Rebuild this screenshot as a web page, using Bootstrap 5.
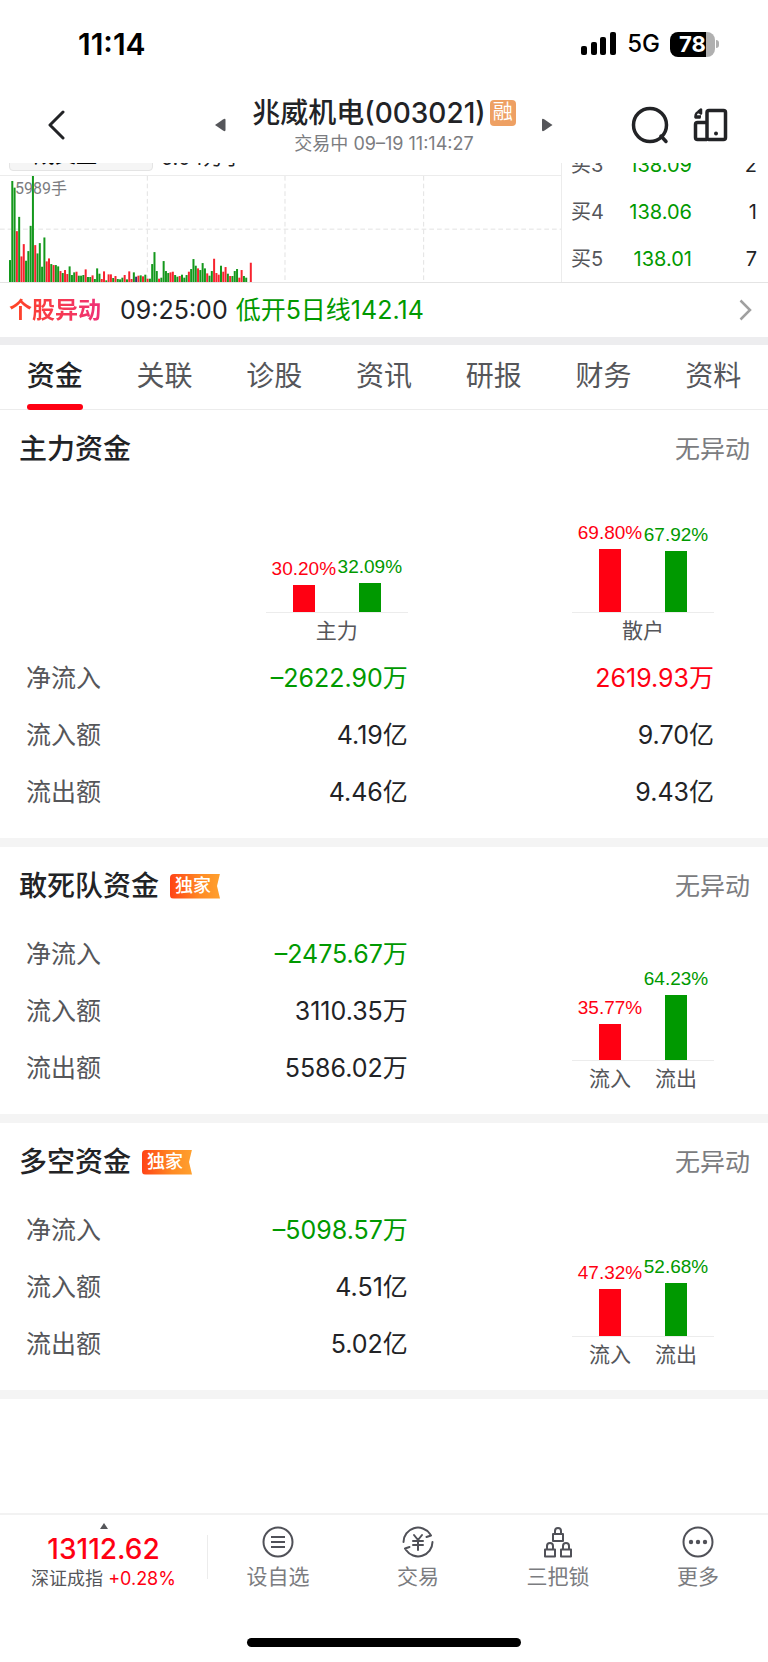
<!DOCTYPE html>
<html lang="zh-CN">
<head>
<meta charset="utf-8">
<meta name="viewport" content="width=device-width, initial-scale=1">
<title>兆威机电(003021)</title>
<link href="https://cdn.jsdelivr.net/npm/bootstrap@5.3.0/dist/css/bootstrap.min.css" rel="stylesheet">
<style>
  :root { --up: #ff0012; --down: #009900; --ink: #222326; --soft: #55565a; --hint: #7b7c80; --rule: #ececec; }
  body { font-family: Inter, "Noto Sans CJK SC", sans-serif; color: var(--ink); background: #fff; }
  a { color: inherit; text-decoration: none; }
  svg { display: block; flex: none; }
  .icon-btn { border: 0; background: none; padding: 0; color: var(--ink); }
  .up { color: var(--up); }
  .down { color: var(--down); }

  .status { height: 86px; padding: 2px 49px 0 78px; color: #000; }
  .clock { font-size: 30px; font-weight: 600; line-height: 36px; }
  .network { font-size: 24px; font-weight: 500; line-height: 28px; margin: 0 10px; }
  .battery { width: 45px; height: 25px; border-radius: 8px; margin-right: 4px; position: relative; color: #fff; font-size: 22px; font-weight: 700; line-height: 25px; text-align: center; background: linear-gradient(90deg, #000 79%, #b0b0b0 79%); }
  .battery::after { content: ""; position: absolute; right: -4px; top: 8px; width: 3px; height: 8px; border-radius: 0 3px 3px 0; background: #b0b0b0; }

  .topbar { height: 77px; padding: 0 40px; }
  .side { flex: 1 1 0; }
  .stock { width: 338px; }
  .stock h1 { font-size: 28px; font-weight: 500; line-height: 38px; margin: 0; }
  .stock p { font-size: 18px; line-height: 22px; margin: 1px 0 0; color: var(--hint); }
  .margin-tag { width: 26px; height: 26px; border-radius: 4px; background: #eea063; color: #fff; font-size: 20px; line-height: 25px; font-weight: 400; text-align: center; margin-left: 4px; }

  .quote { height: 120px; overflow: hidden; border-bottom: 1px solid #e4e4e4; }
  .volume { flex: 1 1 0; border-right: 1px solid var(--rule); }
  .volume-bar { height: 34px; padding: 0 0 4px 9px; flex: none; font-size: 20px; line-height: 34px; }
  .metric { width: 144px; border: 1px solid #e4e4e4; border-radius: 4px; background: #f5f5f5; padding: 0 24px 2px; font-size: 21px; line-height: 26px; margin-right: 8px; }
  .plot { height: 107px; border-top: 1px solid var(--rule); position: relative; flex: none; }
  .plot svg { width: 100%; height: 107px; }
  .plot span { position: absolute; left: 15px; top: 2px; font-family: Roboto, "Noto Sans CJK SC", sans-serif; font-size: 16px; line-height: 22px; color: var(--hint); }
  .book { width: 206px; font-size: 20px; }
  .book tr { height: 47px; }
  .book td, .book th { padding: 0; font-weight: 400; vertical-align: middle; line-height: 24px; }
  .book th { padding-left: 9px; color: var(--soft); }
  .book td:last-child { padding-right: 11px; width: 76px; }

  .alert-row { height: 54px; padding: 0 16px 0 9px; font-size: 25px; line-height: 30px; }
  .alert-tag { font-size: 23px; font-weight: 700; margin-right: 19px; background: linear-gradient(90deg, #ff4422, #ef2f78); -webkit-background-clip: text; background-clip: text; color: transparent; }
  .band { height: 9px; background: #f4f4f4; }
  .band-dark { background: #ededef; height: 8px; }

  .tabs { height: 65px; border-bottom: 1px solid var(--rule); flex-wrap: nowrap; }
  .tabs .nav-item { flex: 1 1 0; }
  .tabs .nav-link { display: inline-block; padding: 15px 0 12px; font-size: 28px; line-height: 32px; color: var(--soft); border-bottom: 6px solid transparent; height: 65px; }
  .tabs .nav-link.active { color: var(--ink); font-weight: 500; position: relative; }
  .tabs .nav-link.active::after { content: ""; position: absolute; left: 0; right: 0; bottom: -6px; height: 6px; border-radius: 3px; background: var(--up); }

  .fund { padding-bottom: 18px; }
  .fund header { height: 78px; padding: 0 18px 0 19px; }
  .fund h2 { font-size: 28px; font-weight: 500; line-height: 36px; margin: 0; }
  .state { font-size: 25px; line-height: 32px; color: var(--hint); }
  .exclusive { width: 50px; height: 25px; margin-left: 11px; border-radius: 4px 0 0 4px; padding-left: 5px; color: #fff; font-size: 18px; font-weight: 500; line-height: 24px; background: linear-gradient(90deg, #ff4316, #ff8a24 60%, #ffa02e); clip-path: polygon(0 0, 100% 0, 94% 50%, 100% 100%, 0 100%); }
  .fund-body { padding: 0 54px 0 26px; }
  .flows { font-size: 25px; line-height: 32px; width: 100%; table-layout: fixed; }
  .flows-half { width: 55.5%; }
  .flows tr { height: 57px; }
  .flows th, .flows td { padding: 0; vertical-align: middle; font-weight: 400; }
  .flows th { color: var(--soft); }
  .flows thead th { height: 161px; vertical-align: bottom; padding-bottom: 3px; }
  .flows .name-col { width: 25%; }
  .flows .main-col { width: 30.5%; }
  .pair { width: 142px; margin: 0 0 0 auto; color: var(--soft); }
  .pair-bars { padding: 0 5px; border-bottom: 1px solid var(--rule); }
  .pair-bars > div { width: 66px; font-family: "Liberation Sans", sans-serif; font-size: 19px; line-height: 20px; }
  .pair-bars i { display: block; width: 22px; margin-top: 6px; background: currentColor; }
  .pair figcaption { font-size: 21px; line-height: 30px; padding: 3px 5px 0; }
  .pair figcaption span { width: 66px; text-align: center; }
  .beside { padding-bottom: 2px; }

  .dock { height: 149px; border-top: 2px solid #f2f2f2; }
  .index-link { width: 207px; padding-top: 8px; }
  .index-link strong { font-size: 28px; font-weight: 500; line-height: 36px; margin-top: 2px; }
  .index-link small { font-size: 18px; line-height: 24px; color: var(--soft); }
  .dock-split { width: 1px; height: 44px; margin-top: 20px; background: var(--rule); }
  .dock nav a { flex: 1 1 0; padding-top: 11px; color: var(--hint); font-size: 21px; line-height: 26px; }
  .dock nav svg { color: #505158; margin-bottom: 6px; }
  .home { width: 274px; height: 9px; border-radius: 5px; background: #000; margin: 0 auto 15px; }
</style>
</head>
<body>
<div class="d-flex flex-column min-vh-100">
  <div class="status d-flex align-items-center">
    <span class="clock me-auto">11:14</span>
    <svg width="36" height="24" viewBox="0 0 36 24" fill="currentColor"><rect x="0" y="14" width="6" height="9" rx="2"/><rect x="10" y="10" width="6" height="13" rx="2"/><rect x="19" y="5" width="6" height="18" rx="2"/><rect x="29" y="0" width="6" height="23" rx="2"/></svg>
    <span class="network">5G</span>
    <span class="battery">78</span>
  </div>

  <div class="topbar d-flex align-items-center">
    <div class="side d-flex">
      <button class="icon-btn ms-2" type="button" aria-label="返回"><svg width="18" height="30" viewBox="0 0 18 30" fill="none" stroke="currentColor" stroke-width="3" stroke-linecap="round" stroke-linejoin="round"><path d="M15 2 2 15 15 28"/></svg></button>
    </div>
    <div class="stock d-flex align-items-center justify-content-between">
      <button class="icon-btn" type="button" aria-label="上一只"><svg width="11" height="14" viewBox="0 0 11 14" fill="#55565a"><path d="M0 7 8 1.500Q10.500 0 10.500 2V12Q10.500 14 8 12.500Z"/></svg></button>
      <div class="text-center">
        <div class="d-flex align-items-center justify-content-center"><h1>兆威机电(003021)</h1><span class="margin-tag">融</span></div>
        <p>交易中 09–19 11:14:27</p>
      </div>
      <button class="icon-btn" type="button" aria-label="下一只"><svg width="11" height="14" viewBox="0 0 11 14" fill="#55565a"><path d="M10.500 7 2.500 1.500Q0 0 0 2V12Q0 14 2.500 12.500Z"/></svg></button>
    </div>
    <div class="side d-flex justify-content-end align-items-center gap-4">
      <button class="icon-btn" type="button" aria-label="搜索"><svg width="38" height="38" viewBox="0 0 38 38" fill="none" stroke="currentColor" stroke-width="3.500" stroke-linecap="round"><circle cx="19" cy="19" r="16.500"/><path d="m30 30 5 5.500"/></svg></button>
      <button class="icon-btn" type="button" aria-label="横竖屏切换"><svg width="35" height="34" viewBox="0 0 35 34" fill="none" stroke="currentColor" stroke-width="3.500" stroke-linejoin="round"><rect x="14" y="2.500" width="18.500" height="29" rx="2"/><path d="M14 14.500H4.500a2 2 0 0 0-2 2V29.500a2 2 0 0 0 2 2H14"/><path d="M7.500 9.500H2.500Q2 3.500 8 3.500M2.500 8.500 8 8.500M5.500 3.500 8 1.500V5.500Z" stroke-width="2.500"/><circle cx="23" cy="25.500" r="2" fill="currentColor" stroke="none"/></svg></button>
    </div>
  </div>

  <div class="quote d-flex align-items-end">
    <div class="volume d-flex flex-column">
      <div class="volume-bar d-flex"><button class="metric text-start" type="button">成交量</button><span>5.04万手</span></div>
      <div class="plot">
        <svg id="volumePlot" viewBox="0 60 1683 322" preserveAspectRatio="none" role="img" aria-label="成交量">
          <g stroke="#e2e2e2" stroke-width="3" stroke-dasharray="14 9"><path d="M0 220H1683M442 60V382M855 60V382M1271 60V382"/></g>
        </svg>
        <span>5989手</span>
      </div>
    </div>
    <table class="book">
      <tr><th scope="row">买3</th><td class="down text-end">138.09</td><td class="text-end">2</td></tr>
      <tr><th scope="row">买4</th><td class="down text-end">138.06</td><td class="text-end">1</td></tr>
      <tr><th scope="row">买5</th><td class="down text-end">138.01</td><td class="text-end">7</td></tr>
    </table>
  </div>

  <a class="alert-row d-flex align-items-center" href="#">
    <span class="alert-tag">个股异动</span><span class="me-2">09:25:00</span><span class="down me-auto">低开5日线142.14</span>
    <svg width="13" height="22" viewBox="0 0 13 22" fill="none" stroke="#a0a0a0" stroke-width="2.500"><path d="m1.500 1.500 9.500 9.500-9.500 9.500"/></svg>
  </a>
  <div class="band band-dark"></div>

  <ul class="tabs nav text-center">
    <li class="nav-item"><a class="nav-link active" href="#" aria-current="page">资金</a></li>
    <li class="nav-item"><a class="nav-link" href="#">关联</a></li>
    <li class="nav-item"><a class="nav-link" href="#">诊股</a></li>
    <li class="nav-item"><a class="nav-link" href="#">资讯</a></li>
    <li class="nav-item"><a class="nav-link" href="#">研报</a></li>
    <li class="nav-item"><a class="nav-link" href="#">财务</a></li>
    <li class="nav-item"><a class="nav-link" href="#">资料</a></li>
  </ul>

  <section class="fund">
    <header class="d-flex align-items-center"><h2 class="me-auto">主力资金</h2><span class="state">无异动</span></header>
    <div class="fund-body">
      <table class="flows">
        <thead><tr>
          <td class="name-col"></td>
          <th class="main-col" scope="col"><figure class="pair"><div class="pair-bars d-flex align-items-end">
            <div class="up d-flex flex-column align-items-center">30.20%<i style="height:27px"></i></div>
            <div class="down d-flex flex-column align-items-center">32.09%<i style="height:29px"></i></div>
          </div><figcaption class="text-center">主力</figcaption></figure></th>
          <th scope="col"><figure class="pair"><div class="pair-bars d-flex align-items-end">
            <div class="up d-flex flex-column align-items-center">69.80%<i style="height:63px"></i></div>
            <div class="down d-flex flex-column align-items-center">67.92%<i style="height:61px"></i></div>
          </div><figcaption class="text-center">散户</figcaption></figure></th>
        </tr></thead>
        <tbody>
          <tr><th scope="row">净流入</th><td class="text-end down">–2622.90万</td><td class="text-end up">2619.93万</td></tr>
          <tr><th scope="row">流入额</th><td class="text-end">4.19亿</td><td class="text-end">9.70亿</td></tr>
          <tr><th scope="row">流出额</th><td class="text-end">4.46亿</td><td class="text-end">9.43亿</td></tr>
        </tbody>
      </table>
    </div>
  </section>
  <div class="band"></div>

  <section class="fund">
    <header class="d-flex align-items-center"><h2>敢死队资金</h2><span class="exclusive me-auto">独家</span><span class="state">无异动</span></header>
    <div class="fund-body d-flex align-items-end justify-content-between">
      <div class="flows-half"><table class="flows">
        <tr><th scope="row">净流入</th><td class="text-end down">–2475.67万</td></tr>
        <tr><th scope="row">流入额</th><td class="text-end">3110.35万</td></tr>
        <tr><th scope="row">流出额</th><td class="text-end">5586.02万</td></tr>
      </table></div>
      <figure class="pair beside"><div class="pair-bars d-flex align-items-end">
        <div class="up d-flex flex-column align-items-center">35.77%<i style="height:36px"></i></div>
        <div class="down d-flex flex-column align-items-center">64.23%<i style="height:65px"></i></div>
      </div><figcaption class="d-flex"><span>流入</span><span>流出</span></figcaption></figure>
    </div>
  </section>
  <div class="band"></div>

  <section class="fund">
    <header class="d-flex align-items-center"><h2>多空资金</h2><span class="exclusive me-auto">独家</span><span class="state">无异动</span></header>
    <div class="fund-body d-flex align-items-end justify-content-between">
      <div class="flows-half"><table class="flows">
        <tr><th scope="row">净流入</th><td class="text-end down">–5098.57万</td></tr>
        <tr><th scope="row">流入额</th><td class="text-end">4.51亿</td></tr>
        <tr><th scope="row">流出额</th><td class="text-end">5.02亿</td></tr>
      </table></div>
      <figure class="pair beside"><div class="pair-bars d-flex align-items-end">
        <div class="up d-flex flex-column align-items-center">47.32%<i style="height:47px"></i></div>
        <div class="down d-flex flex-column align-items-center">52.68%<i style="height:53px"></i></div>
      </div><figcaption class="d-flex"><span>流入</span><span>流出</span></figcaption></figure>
    </div>
  </section>
  <div class="band"></div>

  <footer class="dock d-flex flex-column mt-auto">
    <div class="d-flex align-items-start">
      <a class="index-link d-flex flex-column align-items-center" href="#">
        <svg width="8" height="6" viewBox="0 0 8 6" fill="#55565a"><path d="M4 0 8 6H0Z"/></svg>
        <strong class="up">13112.62</strong>
        <small>深证成指 <span class="up">+0.28%</span></small>
      </a>
      <div class="dock-split"></div>
      <nav class="d-flex flex-fill">
        <a class="d-flex flex-column align-items-center" href="#"><svg width="32" height="32" viewBox="0 0 32 32" fill="none" stroke="currentColor" stroke-width="2"><circle cx="16" cy="16" r="14.500"/><path d="M9 11H23M9 16H23M9 21H23"/></svg>设自选</a>
        <a class="d-flex flex-column align-items-center" href="#"><svg width="32" height="32" viewBox="0 0 32 32" fill="none" stroke="currentColor" stroke-width="2" stroke-linejoin="round" stroke-linecap="round"><path d="M1.500 16A14.500 14.500 0 0 1 28 8L29 9.500 24.500 11M30.500 16A14.500 14.500 0 0 1 4 24L3 22.500 7.500 21"/><path d="m12 9 4 5 4-5M16 14v10M11 15H21M11 19H21"/></svg>交易</a>
        <a class="d-flex flex-column align-items-center" href="#"><svg width="32" height="32" viewBox="0 0 32 32" fill="none" stroke="currentColor" stroke-width="2" stroke-linejoin="round"><path d="M11 8H21V15H11ZM13 8V5a3 3 0 0 1 6 0V8M3 23.500H13V30.500H3ZM5 23.500V20a3 3 0 0 1 6 0V23.500M19 23.500H29V30.500H19ZM21 23.500V20a3 3 0 0 1 6 0V23.500"/></svg>三把锁</a>
        <a class="d-flex flex-column align-items-center" href="#"><svg width="32" height="32" viewBox="0 0 32 32" fill="none" stroke="currentColor" stroke-width="2"><circle cx="16" cy="16" r="14.500"/><g fill="currentColor" stroke="none"><circle cx="9" cy="16" r="2.200"/><circle cx="16" cy="16" r="2.200"/><circle cx="23" cy="16" r="2.200"/></g></svg>更多</a>
      </nav>
    </div>
    <div class="home mt-auto"></div>
  </footer>
</div>
<script src="https://cdn.jsdelivr.net/npm/bootstrap@5.3.0/dist/js/bootstrap.bundle.min.js"></script>
<script>
  // Minute volumes: r = rising, g = falling, k = unchanged
  const minutes = "g69 g307 g287 r156 g199 r80 r117 g67 g96 g172 g322 r114 g89 g120 g49 g137 r65 r74 g57 r54 g54 g50 r36 g30 r39 r27 g50 g24 g32 r34 g22 g22 g24 r41 g18 g18 r23 g12 g44 g28 r12 r35 g8 r26 r26 g15 r21 g12 g11 g16 r24 g11 r35 r12 g32 k19 r22 g23 r20 g25 r13 g13 g57 g93 g36 r13 g16 g66 g36 g30 r32 r34 g24 g19 r21 g25 g16 g24 r34 g42 g72 g52 r44 g39 g60 g44 r29 g22 g36 r73 r30 r25 g52 r34 r48 g28 r21 g21 g36 g42 r16 r39 g21 g16 g0 r61".split(" ");
  const paint = { r: "#f7232f", g: "#14981c", k: "#333366" };
  const plot = document.getElementById("volumePlot");
  minutes.forEach((m, i) => {
    const bar = document.createElementNS("http://www.w3.org/2000/svg", "rect");
    const h = Number(m.slice(1));
    bar.setAttribute("x", 27 + i * 6.88);
    bar.setAttribute("y", 382 - h);
    bar.setAttribute("width", 6);
    bar.setAttribute("height", h);
    bar.setAttribute("fill", paint[m[0]]);
    plot.appendChild(bar);
  });
</script>
</body>
</html>
